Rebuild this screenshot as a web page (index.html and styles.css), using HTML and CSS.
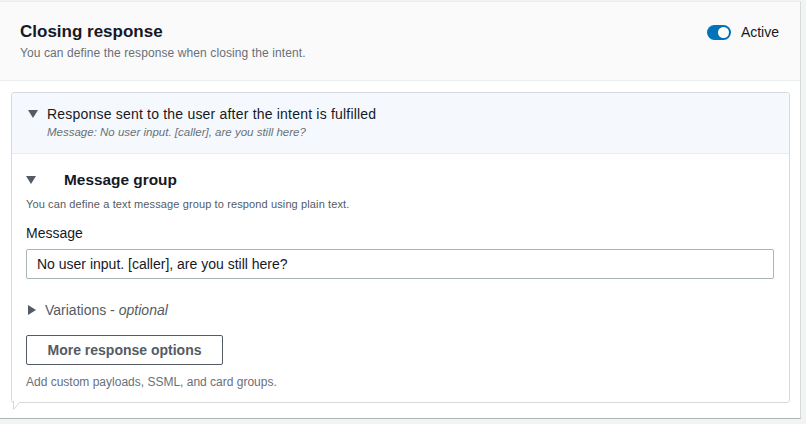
FILE: index.html
```html
<!DOCTYPE html>
<html lang="en">
<head>
  <meta charset="UTF-8">
  <title>Closing response</title>
  <link rel="stylesheet" href="styles.css">
</head>
<body>
  <section class="panel">
    <header class="panel-head">
      <div>
        <h2>Closing response</h2>
        <p class="desc">You can define the response when closing the intent.</p>
      </div>
      <label class="switch"><span class="toggle"></span>Active</label>
    </header>
    <div class="panel-body">
      <div class="card">
        <div class="card-head">
          <span class="caret down"></span>
          <div>
            <div class="card-title">Response sent to the user after the intent is fulfilled</div>
            <div class="card-sub">Message: No user input. [caller], are you still here?</div>
          </div>
        </div>
        <div class="card-body">
          <div class="group-head">
            <span class="caret down"></span>
            <h3>Message group</h3>
          </div>
          <p class="hint">You can define a text message group to respond using plain text.</p>
          <label class="field-label">Message</label>
          <input class="field" type="text" value="No user input. [caller], are you still here?">
          <div class="variations"><span class="caret right"></span>Variations - <i>optional</i></div>
          <button class="btn">More response options</button>
          <p class="hint small">Add custom payloads, SSML, and card groups.</p>
        </div>
        <svg class="tail" width="12" height="10" viewBox="0 0 12 10"><path d="M0.5 0 L2.5 0 L2.5 8.5 L9 1 L12 1" fill="#fff" stroke="#d5dbdb"/><rect x="3" y="0" width="9" height="1" fill="#fff"/></svg>
      </div>
    </div>
  </section>
</body>
</html>
```

FILE: styles.css
```css
*{margin:0;padding:0;box-sizing:border-box}
body{font-family:'Liberation Sans',Arial,sans-serif;background:#f2f3f3;color:#16191f;padding-top:1px}
.panel{width:801px;height:418px;background:#fff;border-top:1px solid #eaeded;border-right:1px solid #d5dbdb;border-bottom:1px solid #aab7b8}
.panel-head{display:flex;justify-content:space-between;align-items:flex-start;background:#fafafa;border-bottom:1px solid #eaeded;height:79px;padding:19px 20px 0 20px}
.panel-head h2{font-size:17px;font-weight:700;line-height:22px}
.desc{font-size:12px;letter-spacing:.1px;color:#687078;margin-top:2px;line-height:16px}
.switch{display:flex;align-items:center;font-size:14px;color:#16191f;margin-top:3px;margin-right:1px}
.toggle{position:relative;width:24px;height:15px;border-radius:8px;background:#0073bb;margin-right:10px}
.toggle::after{content:'';position:absolute;right:2px;top:2px;width:11px;height:11px;border-radius:50%;background:#fff}
.panel-body{padding:11px 10px 0 11px}
.card{position:relative;border:1px solid #d5dbdb;border-radius:3px;height:311px}
.card-head{display:flex;align-items:flex-start;background:#f5f9fd;border-bottom:1px solid #eaeded;height:61px;padding:12px 16px 0 16px;border-radius:3px 3px 0 0}
.card-title{font-size:14px;letter-spacing:.2px;line-height:18px}
.card-sub{font-size:11.5px;font-style:italic;color:#687078;margin-top:3px}
.caret{display:inline-block;width:0;height:0;flex:none}
.caret.down{border-left:5px solid transparent;border-right:5px solid transparent;border-top:8px solid #545b64;margin:5px 9px 0 0}
.card-body{padding:16px 15px 0 14px}
.group-head{display:flex;align-items:center;height:20px}
.group-head .caret.down{margin:0 28px 0 0}
.group-head h3{font-size:15.4px;font-weight:700}
.hint{font-size:11px;letter-spacing:.12px;color:#545b64;margin-top:7px;line-height:15px}
.hint.small{font-size:12px;letter-spacing:0;color:#687078;margin-top:10px}
.field-label{display:block;font-size:14px;margin-top:12px;line-height:18px}
.field{display:block;width:748px;height:30px;margin-top:7px;border:1px solid #aab7b8;border-radius:2px;padding:0 10px;font-family:inherit;font-size:14px;color:#16191f}
.variations{display:flex;align-items:center;font-size:14px;color:#545b64;margin-top:22px;height:18px}
.variations i{margin-left:4px}
.caret.right{border-top:5px solid transparent;border-bottom:5px solid transparent;border-left:8px solid #545b64;margin:0 9px 0 2px}
.btn{display:block;margin-top:16px;width:197px;height:30px;background:#fff;border:1px solid #545b64;border-radius:2px;font-family:inherit;font-size:14px;font-weight:700;color:#545b64}
.tail{position:absolute;left:-1px;bottom:-9px}
```
